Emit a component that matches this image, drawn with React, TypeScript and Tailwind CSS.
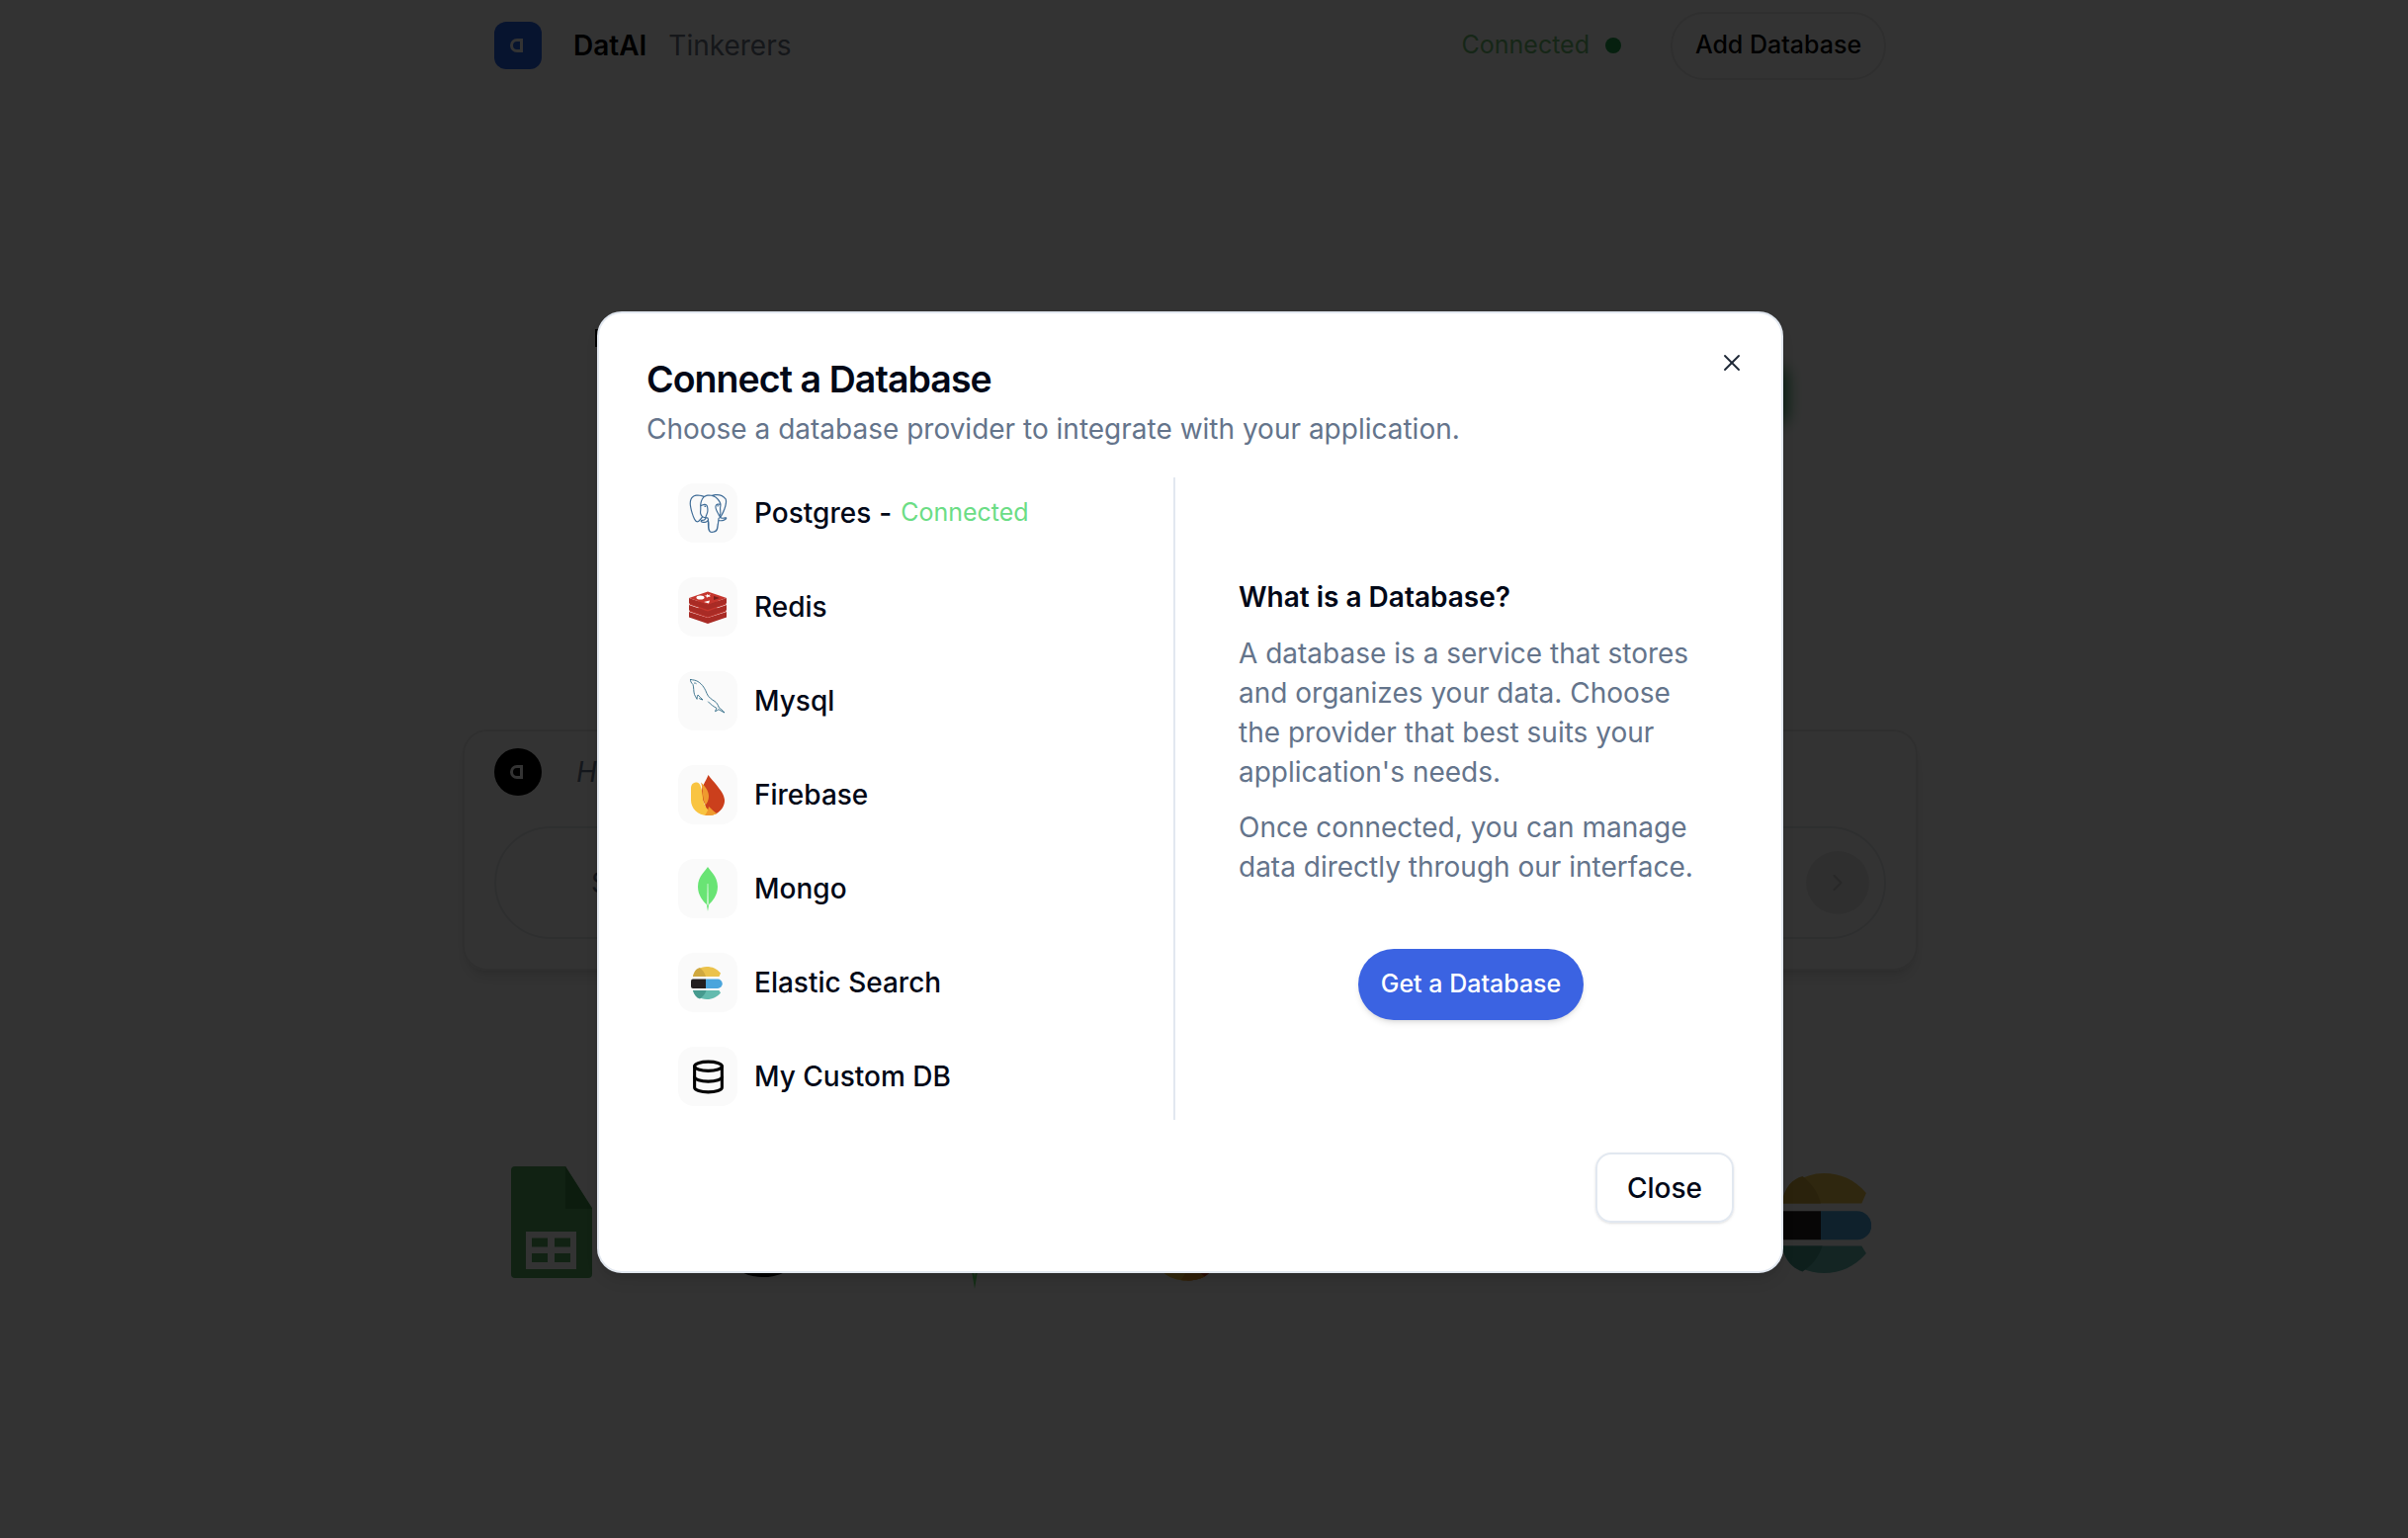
import React from 'react';
import { X, Database, ChevronRight } from 'lucide-react';
import { SiPostgresql } from 'react-icons/si';

type IconProps = { className?: string; viewBox?: string };

const RedisIcon: React.FC<IconProps> = ({ className, viewBox = '0 0 60 60' }) => (
  <svg viewBox={viewBox} className={className}>
    <path d="M11 35v5.500l19 6.500 19-6.500V35L30 41z" fill="#a92b25" />
    <path d="M11 34.500 30 28l19 6.500L30 41z" fill="#c5352d" />
    <path d="M11 28v5.500L30 40l19-6.500V28L30 34.500z" fill="#a92b25" />
    <path d="M11 27.500 30 21l19 6.500L30 34z" fill="#c5352d" />
    <path d="M11 21v5.500L30 33l19-6.500V21L30 27.500z" fill="#a92b25" />
    <path d="M11 21 30 14.500 49 21 30 27.500z" fill="#c5352d" />
    <ellipse cx="22.500" cy="20.500" rx="4" ry="2" fill="#fff" />
    <path d="M29 17l1.500 1 2.500-.500-1.500 1.500 1.500 1-2.500-.200-1.500 1-.500-1.500-2-.500 2.500-.500z" fill="#fff" />
    <path d="M26 25l6-1.500-1 3z" fill="#fff" />
    <path d="M36 19l6 2-6 2z" fill="#7a1f1a" />
  </svg>
);

const MysqlIcon: React.FC<IconProps> = ({ className, viewBox = '0 0 60 60' }) => (
  <svg viewBox={viewBox} className={className} fill="none" stroke="#2f6a86" strokeWidth="0.9" strokeLinejoin="round" strokeLinecap="round">
    <path d="M12.500 8.500c3 .500 5 .500 7.500 2 5 3 7.500 8 9 12 1.500 4 5 6 8 8 2 1.400 3 3 4 5.500" />
    <path d="M12.500 8.500c-.500 1.500 1 3.500 2.500 5 1 3 .500 7 1.500 10 .500 1.500 1.500 3 2.500 4.500" />
    <path d="M19 28c.200-1.600.500-3.200 1-4 1.300 1.700 3.500 3.500 5 5-1.500-.300-2.600-.800-3.500-1.300" />
    <path d="M41 36.500c1.500 1.200 4 3 6 5.500-2-.800-4-2.200-6-3.300-1.300.900-2.400 1.600-3.500 2 .500-1.300 1-2.500 1.500-3.200-3-1.800-6-3.600-8.500-6.500" />
    <path d="M16.500 12c.700-.100 1.200.100 1.700.500" />
  </svg>
);

const FirebaseIcon: React.FC<IconProps> = ({ className, viewBox = '0 0 60 60' }) => (
  <svg viewBox={viewBox} className={className}>
    <path d="M30.500 10c2 3.500 6 6.500 9 11 3.500 4.500 7 9 7.500 14 .500 5.500-3 11-8 14-3 1.500-6 2-8 2-1 0-3-1-3-6 0-8-5-9-5-15 0-8 5-13 7.500-20z" fill="#cb3f1c" />
    <path d="M19 17.500c-3 0-6 1.500-6 6v12c0 8 6.500 15.500 17 15.500 4 0 7-1 9-2-8-1.500-13-6-14-16-.500-6-2-15.500-6-15.500z" fill="#f9c441" />
    <path d="M23 17.500c3.500 3 8 8 8 14 0 4-1.500 7-3.500 9-1.500-3.500-2-7-2.500-10.500-.300-4-.800-9-2-12.500z" fill="#ef9a2e" />
    <path d="M31 42c2.500 2.500 5.500 5 8 7-2.500 1.200-5.500 2-9 2-1 0-2 0-3-.300 2-1.700 3.500-5.700 4-8.700z" fill="#ef9a2e" />
  </svg>
);

const MongoIcon: React.FC<IconProps> = ({ className, viewBox = '0 0 60 60' }) => (
  <svg viewBox={viewBox} className={className}>
    <path d="M30 8c1.500 3 10 9.500 10 20 0 9-5.500 15-8.800 18L30 53l-1.200-7C25.500 43 20 37 20 28 20 17.500 28.500 11 30 8z" fill="#69e474" />
    <path d="M29.600 25h.8l.4 20-.8 3-.8-3z" fill="#d7f7da" />
  </svg>
);

const ElasticIcon: React.FC<IconProps> = ({ className, viewBox = '0 0 60 60' }) => (
  <svg viewBox={viewBox} className={className}>
    <path d="M15 24c1-5.500 7-10 14-10 5.500 0 10 2 14 6.500l-1.500 3.500z" fill="#ebc24b" />
    <path d="M15 24c1-5.500 3.500-8 7-9 2.500 2 5 5 6 9z" fill="#cfa83f" />
    <path d="M13 28.500a2 2 0 0 1 2-2h13v9.500H15a2 2 0 0 1-2-2z" fill="#231f20" />
    <path d="M28 26.500h12a4.750 4.750 0 0 1 0 9.500H28z" fill="#4aa5dc" />
    <path d="M15 38c1.500 5.500 7.500 9 14 9 6 0 10.500-2.500 14-6.500L41.500 38z" fill="#63bbae" />
    <path d="M15 38c1 4.500 3.500 7.500 7 8.500 3-2 5.500-5 6.500-8.500z" fill="#469a8e" />
  </svg>
);

const SheetsIcon: React.FC<IconProps> = ({ className }) => (
  <svg viewBox="0 0 82 113" className={className}>
    <path d="M4 0h51l27 42v67a4 4 0 0 1-4 4H4a4 4 0 0 1-4-4V4a4 4 0 0 1 4-4z" fill="#55a860" />
    <path d="M55 0l27 43H55z" fill="#3f8a49" />
    <path fill="#fff" fillRule="evenodd" d="M15 66h51v38H15zM21 72.500v9h16v-9zM44 72.500v9h16v-9zM21 88v9h16v-9zM44 88v9h16v-9z" />
  </svg>
);

const RingIcon: React.FC<IconProps> = ({ className }) => (
  <svg viewBox="0 0 100 100" className={className} fill="none" stroke="#000" strokeWidth="8">
    <circle cx="50" cy="50" r="45" />
  </svg>
);

const LogoMark: React.FC<{ className: string; fill: string }> = ({ className, fill }) => (
  <div className={className}>
    <svg viewBox="0 0 24 24" className="w-6 h-6">
      <path d="M17 5v14h-6a7 7 0 0 1 0-14zM14 8h-3a4 4 0 0 0 0 8h3z" fill={fill} fillRule="evenodd" />
    </svg>
  </div>
);

const providers: { name: string; icon: React.ReactNode; connected?: boolean }[] = [
  { name: 'Postgres', icon: <SiPostgresql className="w-[39px] h-[39px] text-[#3f6c97]" />, connected: true },
  { name: 'Redis', icon: <RedisIcon className="w-[60px] h-[60px]" /> },
  { name: 'Mysql', icon: <MysqlIcon className="w-[60px] h-[60px]" /> },
  { name: 'Firebase', icon: <FirebaseIcon className="w-[60px] h-[60px]" /> },
  { name: 'Mongo', icon: <MongoIcon className="w-[60px] h-[60px]" /> },
  { name: 'Elastic Search', icon: <ElasticIcon className="w-[60px] h-[60px]" /> },
  { name: 'My Custom DB', icon: <Database className="w-[37px] h-[37px] text-black" /> },
];

const BackgroundPage: React.FC = () => (
  <div className="w-[1408px] ml-[500px] flex flex-col">
    {/* Header */}
    <div className="h-[92px] flex items-center justify-between">
      <div className="flex items-center">
        <LogoMark className="w-12 h-12 rounded-xl bg-[#2563eb] flex items-center justify-center" fill="#ffffff" />
        <span className="ml-8 text-[28px] font-semibold text-black">DatAI</span>
        <span className="ml-[22px] text-[28px] text-[#6b7280]">Tinkerers</span>
      </div>
      <div className="flex items-center">
        <span className="text-[25px] text-[#6fbf73]">Connected</span>
        <span className="ml-4 w-4 h-4 rounded-full bg-[#22a04a]" />
        <button className="ml-[50px] w-[218px] h-[69px] rounded-[34px] border-2 border-[#e8e8e8] text-[25px] font-medium text-black">
          Add Database
        </button>
      </div>
    </div>

    {/* Hero */}
    <div className="flex justify-between h-[646px] -mx-[0px]">
      <div className="ml-[102px] mt-[241px] w-[100px] h-[18px] bg-black" />
      <div className="mt-[280px] -mr-[0px] w-[110px] h-[56px] rounded-lg bg-[#1f9d55] blur-sm translate-x-[-100px]" />
    </div>

    {/* Chat card */}
    <div className="-mx-[32px] h-[244px] rounded-[25px] border-2 border-[#ececec] shadow-lg px-[30px] pt-[17px]">
      <div className="flex items-center">
        <LogoMark className="w-12 h-12 rounded-full bg-black flex items-center justify-center" fill="#ffffff" />
        <span className="ml-[35px] text-[28px] italic text-[#64748b]">Ho</span>
      </div>
      <div className="mt-[31px] h-[114px] rounded-[57px] border-2 border-[#e6e8ec] flex items-center justify-between pl-[96px] pr-[15px]">
        <span className="text-[28px] text-[#64748b]">S</span>
        <div className="w-16 h-16 rounded-full bg-[#ececec] flex items-center justify-center">
          <ChevronRight className="w-7 h-7 text-[#c8c8c8]" />
        </div>
      </div>
    </div>

    {/* Integrations */}
    <div className="mt-[198px] pl-[7px] pr-[15px] flex justify-between">
      <div className="w-[102px] h-[124px] flex items-start justify-center"><SheetsIcon className="w-[82px] h-[113px]" /></div>
      <div className="w-[102px] h-[124px] flex items-start justify-center"><RingIcon className="mt-[13px] w-[100px] h-[100px]" /></div>
      <div className="w-[102px] h-[124px] flex items-end justify-center"><MongoIcon viewBox="20 8 20 45" className="w-[50px] h-[112px]" /></div>
      <div className="w-[102px] h-[124px] flex items-end justify-center"><FirebaseIcon viewBox="13 10 34 41" className="mb-[4px] w-[69px] h-[92px]" /></div>
      <div className="w-[102px] h-[124px]" />
      <div className="w-[102px] h-[124px]" />
      <div className="w-[102px] h-[124px] flex items-start justify-center"><ElasticIcon viewBox="13 14 30 33" className="mt-[7px] w-[102px] h-[101px]" /></div>
    </div>
  </div>
);

const ConnectDialog: React.FC = () => (
  <div className="relative w-[1200px] h-[973px] rounded-[25px] border-2 border-[#e2e8f0] bg-white shadow-lg px-[48px] pt-[46px] text-[#020817]">
    <button className="absolute right-[36px] top-[36px] text-[#1f2937]">
      <X className="w-[28px] h-[28px]" strokeWidth={1.6} />
    </button>

    <h2 className="text-[37.500px] leading-[42px] font-semibold tracking-tight">Connect a Database</h2>
    <p className="mt-[9px] text-[28px] leading-[40px] text-[#64748b]">Choose a database provider to integrate with your application.</p>

    <div className="mt-[29px] flex h-[650px]">
      {/* Providers */}
      <div className="w-[535px] border-r-2 border-[#e2e8f0] pl-[32px] pt-[6px] flex flex-col gap-[35px]">
        {providers.map((p) => (
          <div key={p.name} className="flex items-center gap-[17px] h-[60px]">
            <div className="w-[60px] h-[60px] rounded-2xl bg-[#fafafa] flex items-center justify-center">{p.icon}</div>
            <span className="text-[28px] font-medium">{p.name}</span>
            {p.connected && (
              <span className="-ml-[9px] flex items-center">
                <span className="text-[28px] font-medium">-</span>
                <span className="ml-[9px] text-[25px] text-[#6bdd85]">Connected</span>
              </span>
            )}
          </div>
        ))}
      </div>

      {/* Explainer */}
      <div className="pl-[64px] flex-1 flex flex-col justify-center">
        <div className="w-[470px]">
          <h3 className="text-[28px] leading-[40px] font-semibold">What is a Database?</h3>
          <p className="mt-[17px] text-[28px] leading-[40px] text-[#64748b]">
            A database is a service that stores and organizes your data. Choose the provider that best suits your application's needs.
          </p>
          <p className="mt-[16px] text-[28px] leading-[40px] text-[#64748b]">
            Once connected, you can manage data directly through our interface.
          </p>
          <div className="mt-[63px] flex justify-center">
            <button className="w-[228px] h-[72px] rounded-full bg-[#3b63e2] text-white text-[25px] font-medium shadow-md">Get a Database</button>
          </div>
        </div>
      </div>
    </div>

    <div className="mt-[33px] flex justify-end">
      <button className="w-[140px] h-[71px] rounded-[16px] border-2 border-[#e2e8f0] text-[28px] font-medium shadow-sm">Close</button>
    </div>
  </div>
);

export default function App() {
  return (
    <div className="relative w-[2436px] h-[1556px] overflow-hidden bg-white font-['Inter',sans-serif]">
      <BackgroundPage />
      {/* Overlay */}
      <div className="absolute inset-0 bg-black/80 flex justify-center items-start pt-[315px] pr-[28px]">
        <ConnectDialog />
      </div>
    </div>
  );
}
